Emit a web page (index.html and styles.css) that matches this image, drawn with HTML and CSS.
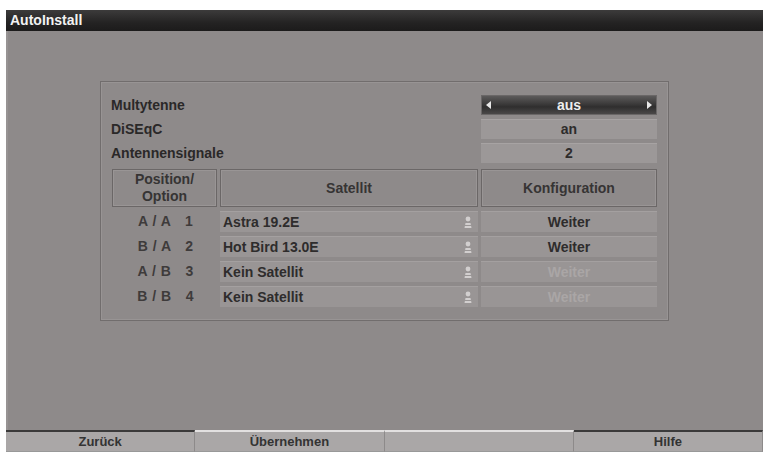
FILE: index.html
```html
<!DOCTYPE html>
<html lang="de">
<head>
  <meta charset="UTF-8">
  <title>AutoInstall</title>
  <link rel="stylesheet" href="styles.css">
</head>
<body>

<div class="screen">
  <div class="title">AutoInstall</div>

  <div class="content">
    <div class="panel">
      <div class="grid">
        <!-- Grundeinstellungen -->
        <div class="label">Multytenne</div>
        <div class="value select">
          <span class="arrow left"></span>aus<span class="arrow right"></span>
        </div>
        <div class="label">DiSEqC</div>
        <div class="value">an</div>
        <div class="label">Antennensignale</div>
        <div class="value">2</div>

        <!-- Tabellenkopf -->
        <div class="head">Position/<br>Option</div>
        <div class="head">Satellit</div>
        <div class="head">Konfiguration</div>

        <!-- Zeilen -->
        <div class="pos">A / A   1</div>
        <div class="sat">Astra 19.2E<svg class="lock" viewBox="0 0 10 14"><circle cx="5" cy="4" r="2.4"/><path d="M1.5 13 L2.5 8 H7.5 L8.5 13 Z"/><path d="M1 10.5 H9" class="line"/></svg></div>
        <div class="conf">Weiter</div>

        <div class="pos">B / A   2</div>
        <div class="sat">Hot Bird 13.0E<svg class="lock" viewBox="0 0 10 14"><circle cx="5" cy="4" r="2.4"/><path d="M1.5 13 L2.5 8 H7.5 L8.5 13 Z"/><path d="M1 10.5 H9" class="line"/></svg></div>
        <div class="conf">Weiter</div>

        <div class="pos">A / B   3</div>
        <div class="sat">Kein Satellit<svg class="lock" viewBox="0 0 10 14"><circle cx="5" cy="4" r="2.4"/><path d="M1.5 13 L2.5 8 H7.5 L8.5 13 Z"/><path d="M1 10.5 H9" class="line"/></svg></div>
        <div class="conf off">Weiter</div>

        <div class="pos">B / B   4</div>
        <div class="sat">Kein Satellit<svg class="lock" viewBox="0 0 10 14"><circle cx="5" cy="4" r="2.4"/><path d="M1.5 13 L2.5 8 H7.5 L8.5 13 Z"/><path d="M1 10.5 H9" class="line"/></svg></div>
        <div class="conf off">Weiter</div>
      </div>
    </div>
  </div>

  <div class="footer">
    <div class="fbtn dark">Zurück</div>
    <div class="fbtn light">Übernehmen</div>
    <div class="fbtn light"></div>
    <div class="fbtn dark">Hilfe</div>
  </div>
</div>

</body>
</html>
```

FILE: styles.css
```css
* { box-sizing: border-box; }
body {
  margin: 0;
  background: #fff;
  font-family: 'Liberation Sans', Arial, sans-serif;
  font-size: 14px;
  font-weight: bold;
  color: #2e2c2c;
}
.screen {
  margin: 10px 0 0 6px;
  width: 757px;
  height: 442px;
  display: flex;
  flex-direction: column;
}
.title {
  height: 21px;
  line-height: 21px;
  padding-left: 4px;
  color: #f2f2f2;
  background: linear-gradient(#3c3b3b, #242323 60%, #1c1b1b);
}
.content {
  flex: 1;
  background: #8e8a8a;
  padding: 50px 0 0 92px;
  border-left: 2px solid #979393;
}
.panel {
  width: 569px;
  height: 240px;
  border: 1px solid #716d6d;
  box-shadow: inset 0 0 0 1px #989494;
  padding: 13px 11px 0 11px;
}
.grid {
  display: grid;
  grid-template-columns: 105px 258px 176px;
  grid-template-rows: 20px 20px 20px 40px 21px 21px 21px 21px;
  column-gap: 3px;
  row-gap: 4px;
}
.label {
  grid-column: 1 / 3;
  line-height: 20px;
  margin-left: -1px;
  color: #2a2828;
}
.value {
  background: #9c9898;
  border-top: 1px solid #a7a3a3;
  text-align: center;
  line-height: 19px;
}
.select {
  position: relative;
  color: #eee;
  border: 1px solid #6a6767;
  background: linear-gradient(#5c5a5a, #3b3a3a 45%, #2f2e2e 60%, #4a4848);
  line-height: 18px;
}
.arrow {
  position: absolute;
  top: 5px;
  width: 0;
  height: 0;
  border-top: 4px solid transparent;
  border-bottom: 4px solid transparent;
}
.arrow.left { left: 4px; border-right: 5px solid #e8e8e8; }
.arrow.right { right: 4px; border-left: 5px solid #e8e8e8; }
.head {
  margin-top: 2px;
  border: 1px solid #6b6767;
  box-shadow: inset 0 0 0 1px #999595;
  display: flex;
  align-items: center;
  justify-content: center;
  text-align: center;
  line-height: 17px;
  color: #363434;
}
.pos {
  white-space: pre;
  text-align: center;
  line-height: 21px;
  color: #3e3b3b;
  padding-left: 2px;
  word-spacing: 1px;
}
.sat {
  position: relative;
  background: #999595;
  border-top: 1px solid #a4a0a0;
  line-height: 20px;
  padding-left: 3px;
}
.lock {
  position: absolute;
  right: 5px;
  top: 3px;
  width: 10px;
  height: 14px;
  fill: #d2cfcf;
}
.lock .line { stroke: #9a9696; stroke-width: 1; fill: none; }
.conf {
  background: #999595;
  border-top: 1px solid #a4a0a0;
  line-height: 20px;
  text-align: center;
}
.conf.off { color: #aaa6a6; }
.footer {
  height: 22px;
  display: flex;
}
.fbtn {
  flex: 1;
  background: #aaa7a7;
  border-right: 1px solid #8d8a8a;
  border-bottom: 1px solid #999;
  text-align: center;
  line-height: 19px;
  font-size: 13px;
  color: #333;
}
.fbtn.dark { border-top: 2px solid #3b3a3a; }
.fbtn.light { border-top: 2px solid #e2e0e0; }
```
